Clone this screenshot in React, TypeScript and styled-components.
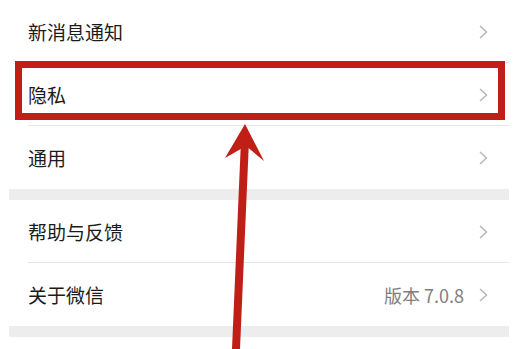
import React from 'react'
import styled, { createGlobalStyle } from 'styled-components'

const Global = createGlobalStyle`
  html, body {
    margin: 0;
    padding: 0;
    background: #ffffff;
  }
  body {
    font-family: "Noto Sans CJK SC", "Noto Sans", sans-serif;
    width: 532px;
    height: 349px;
    overflow: hidden;
  }
`

type Item = { label: string; value?: string; marked?: boolean }

const groups: Item[][] = [
  [{ label: '新消息通知' }, { label: '隐私', marked: true }, { label: '通用' }],
  [{ label: '帮助与反馈' }, { label: '关于微信', value: '版本 7.0.8' }],
]

const Chevron = () => (
  <svg width="9" height="14" viewBox="0 0 9 14">
    <polyline points="1,1 7.5,7 1,13" fill="none" stroke="#b4b4b4" strokeWidth="1.4" />
  </svg>
)

const App = () => {
  return (
    <Page>
      <Global />
      <List>
        {groups.map((group, gi) => (
          <React.Fragment key={gi}>
            <Group>
              {group.map((item, i) => (
                <Row key={item.label} marked={item.marked} last={i === group.length - 1}>
                  <Label>{item.label}</Label>
                  <Right>
                    {item.value && <Value>{item.value}</Value>}
                    <Chevron />
                  </Right>
                </Row>
              ))}
            </Group>
            <Band />
          </React.Fragment>
        ))}
      </List>
      <Arrow width="532" height="349" viewBox="0 0 532 349">
        <polygon points="241,140 249,140 240,349 232,349" fill="#c01f17" />
        <polygon points="245,124 264,161 246,146 225,158" fill="#c01f17" />
      </Arrow>
    </Page>
  )
}

export default App

const Page = styled.div`
  position: relative;
  width: 532px;
  height: 349px;
  background: #ffffff;
`
const List = styled.div`
  width: 500px;
  margin-left: 9px;
  display: flex;
  flex-direction: column;
`
const Group = styled.section`
  display: flex;
  flex-direction: column;
  background: #ffffff;
`
const Row = styled.div<{ marked?: boolean; last?: boolean }>`
  position: relative;
  height: 63px;
  box-sizing: border-box;
  display: flex;
  align-items: center;
  justify-content: space-between;
  padding: 0 21px 0 19px;

  &::before {
    content: '';
    display: ${(p) => (p.last ? 'none' : 'block')};
    position: absolute;
    left: 19px;
    right: 0;
    bottom: 0;
    height: 1px;
    background: #e8e8e8;
  }

  &::after {
    content: '';
    display: ${(p) => (p.marked ? 'block' : 'none')};
    position: absolute;
    left: 6px;
    right: 4px;
    top: -2px;
    bottom: 6px;
    border: 7px solid #c01f17;
    z-index: 2;
  }
`
const Label = styled.span`
  font-size: 19px;
  color: #1b1b1b;
  letter-spacing: 0;
`
const Right = styled.div`
  display: flex;
  align-items: center;
  gap: 15px;
`
const Value = styled.span`
  font-size: 18px;
  color: #808080;
`
const Band = styled.div`
  height: 11px;
  background: #ededed;
`
const Arrow = styled.svg`
  position: absolute;
  left: 0;
  top: 0;
  pointer-events: none;
  z-index: 3;
`
